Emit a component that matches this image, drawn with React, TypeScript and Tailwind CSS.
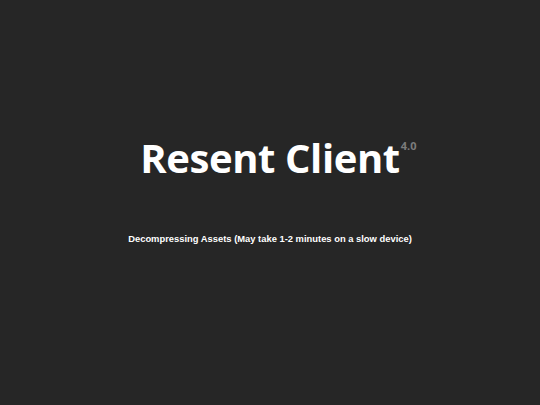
export default function App() {
  return (
    <div className="flex flex-col items-center justify-center min-h-screen pb-[25px] bg-[#262626] text-white">
      {/* TITLE */}
      <div className="relative">
        <h1 className="font-['Open_Sans',sans-serif] text-[40px] leading-[48px] font-bold tracking-[-0.4px]">
          Resent Client
        </h1>
        <span className="absolute left-full top-[4px] ml-[1px] font-['Open_Sans',sans-serif] text-[11px] font-bold text-[#7c7c7c]">
          4.0
        </span>
      </div>

      <p className="mt-[50px] font-['Liberation_Sans',Arial,sans-serif] text-[9.4px] font-bold">
        Decompressing Assets (May take 1-2 minutes on a slow device)
      </p>
    </div>
  );
}
